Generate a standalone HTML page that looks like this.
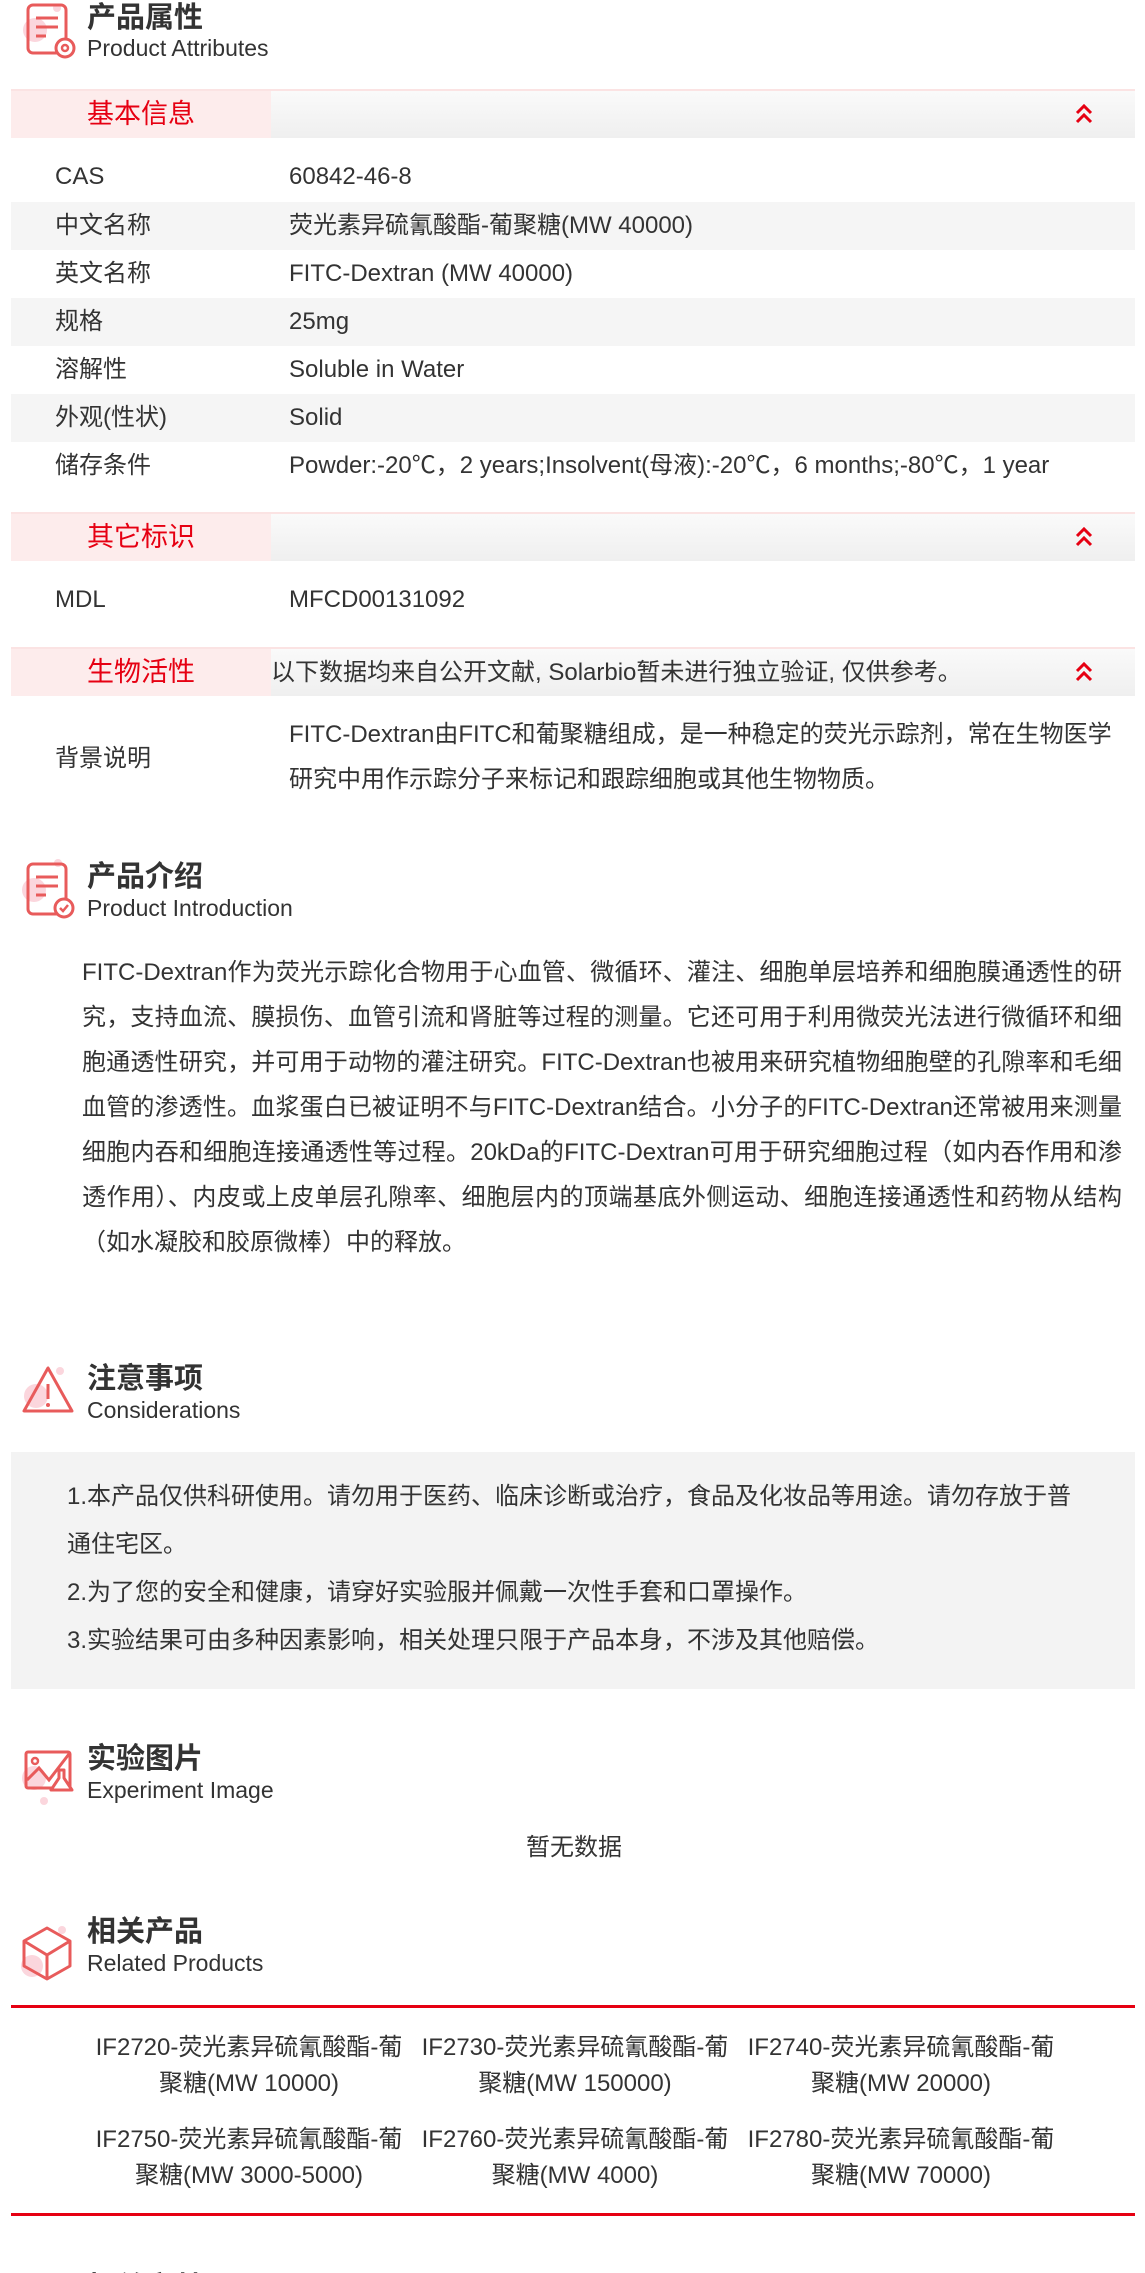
<!DOCTYPE html>
<html><head><meta charset="utf-8">
<style>
*{margin:0;padding:0;box-sizing:border-box}
html,body{width:1145px;height:2273px;overflow:hidden;background:#fff}
body{position:relative;font-family:"Liberation Sans","Noto Sans CJK SC",sans-serif;color:#333}
.a{position:absolute;white-space:nowrap}
.t{font-size:29px;font-weight:bold;line-height:36px;color:#333}
.s{font-size:23px;line-height:28px;color:#333}
.bar{position:absolute;left:11px;width:1124px;height:49px;border-top:2px solid #fbe3e3;background:linear-gradient(#fafafa,#efefef)}
.bar .l{position:absolute;left:0;top:0;width:260px;height:100%;background:#fdecec;color:#e60012;font-size:27px;line-height:47px;text-align:center}
.bar svg{position:absolute;left:1063px;top:12px}
.bar .n{position:absolute;left:260px;top:0;line-height:47px;font-size:24px;color:#333}
.row{position:absolute;left:11px;width:1124px;height:48px;font-size:24px;line-height:48px}
.g{background:#f5f5f5}
.row .k{position:absolute;left:44px}
.row .v{position:absolute;left:278px;white-space:nowrap}
.p{position:absolute;font-size:24px;line-height:45px}
.it{position:absolute;width:326px;text-align:center;font-size:24px;line-height:36px}
</style></head><body>

<svg class="a" style="left:20px;top:2px" width="56" height="58" viewBox="0 0 56 58"><circle cx="15" cy="28" r="12" fill="#fbd6dd"/><circle cx="37" cy="6" r="4" fill="#fbd6dd"/><rect x="8" y="3" width="38" height="48" rx="5" fill="none" stroke="#e85b5b" stroke-width="3"/><path d="M16 16h22M16 25h22M16 34h10" stroke="#e85b5b" stroke-width="3"/><circle cx="45" cy="46" r="9" fill="#fff" stroke="#e85b5b" stroke-width="3"/><circle cx="45" cy="46" r="3" fill="none" stroke="#e85b5b" stroke-width="2.5"/></svg>
<div class="a t" style="left:87px;top:0px">产品属性</div>
<div class="a s" style="left:87px;top:34px">Product Attributes</div>

<div class="bar" style="top:89px"><div class="l">基本信息</div><svg width="20" height="22" viewBox="0 0 20 22"><path d="M3 10l7-7 7 7M3 19l7-7 7 7" fill="none" stroke="#e60012" stroke-width="3"/></svg></div>
<div class="row" style="top:153px"><span class="k">CAS</span><span class="v">60842-46-8</span></div>
<div class="row g" style="top:202px"><span class="k">中文名称</span><span class="v">荧光素异硫氰酸酯-葡聚糖(MW 40000)</span></div>
<div class="row" style="top:250px"><span class="k">英文名称</span><span class="v">FITC-Dextran (MW 40000)</span></div>
<div class="row g" style="top:298px"><span class="k">规格</span><span class="v">25mg</span></div>
<div class="row" style="top:346px"><span class="k">溶解性</span><span class="v">Soluble in Water</span></div>
<div class="row g" style="top:394px"><span class="k">外观(性状)</span><span class="v">Solid</span></div>
<div class="row" style="top:442px"><span class="k">储存条件</span><span class="v">Powder:-20℃，2 years;Insolvent(母液):-20℃，6 months;-80℃，1 year</span></div>

<div class="bar" style="top:512px"><div class="l">其它标识</div><svg width="20" height="22" viewBox="0 0 20 22"><path d="M3 10l7-7 7 7M3 19l7-7 7 7" fill="none" stroke="#e60012" stroke-width="3"/></svg></div>
<div class="row" style="top:576px"><span class="k">MDL</span><span class="v">MFCD00131092</span></div>

<div class="bar" style="top:647px"><div class="l">生物活性</div><div class="n">以下数据均来自公开文献, Solarbio暂未进行独立验证, 仅供参考。</div><svg width="20" height="22" viewBox="0 0 20 22"><path d="M3 10l7-7 7 7M3 19l7-7 7 7" fill="none" stroke="#e60012" stroke-width="3"/></svg></div>
<div class="a" style="left:55px;top:747px;font-size:24px;line-height:24px">背景说明</div>
<div class="p" style="left:289px;top:712px;width:840px">FITC-Dextran由FITC和葡聚糖组成，是一种稳定的荧光示踪剂，常在生物医学<br>研究中用作示踪分子来标记和跟踪细胞或其他生物物质。</div>

<svg class="a" style="left:20px;top:858px" width="56" height="62" viewBox="0 0 56 62"><circle cx="14" cy="32" r="12" fill="#fbd6dd"/><circle cx="38" cy="5" r="4" fill="#fbd6dd"/><rect x="8" y="6" width="38" height="50" rx="5" fill="none" stroke="#e85b5b" stroke-width="3"/><path d="M16 19h22M16 28h22M16 37h10" stroke="#e85b5b" stroke-width="3"/><circle cx="44" cy="50" r="9" fill="#fff" stroke="#e85b5b" stroke-width="3"/><path d="M40 50l3 3 5-6" fill="none" stroke="#e85b5b" stroke-width="2.5"/></svg>
<div class="a t" style="left:87px;top:859px">产品介绍</div>
<div class="a s" style="left:87px;top:894px">Product Introduction</div>
<div class="p" style="left:82px;top:950px;width:1040px;text-align:justify">FITC-Dextran作为荧光示踪化合物用于心血管、微循环、灌注、细胞单层培养和细胞膜通透性的研究，支持血流、膜损伤、血管引流和肾脏等过程的测量。它还可用于利用微荧光法进行微循环和细胞通透性研究，并可用于动物的灌注研究。FITC-Dextran也被用来研究植物细胞壁的孔隙率和毛细血管的渗透性。血浆蛋白已被证明不与FITC-Dextran结合。小分子的FITC-Dextran还常被用来测量细胞内吞和细胞连接通透性等过程。20kDa的FITC-Dextran可用于研究细胞过程（如内吞作用和渗透作用）、内皮或上皮单层孔隙率、细胞层内的顶端基底外侧运动、细胞连接通透性和药物从结构（如水凝胶和胶原微棒）中的释放。</div>

<svg class="a" style="left:20px;top:1362px" width="56" height="56" viewBox="0 0 56 56"><circle cx="16" cy="34" r="12" fill="#fbd6dd"/><circle cx="40" cy="9" r="4" fill="#fbd6dd"/><path d="M28 6L4 49h48z" fill="none" stroke="#e85b5b" stroke-width="3" stroke-linejoin="round"/><path d="M28 22v15" stroke="#e85b5b" stroke-width="3"/><circle cx="28" cy="43" r="2" fill="#e85b5b"/></svg>
<div class="a t" style="left:87px;top:1361px">注意事项</div>
<div class="a s" style="left:87px;top:1396px">Considerations</div>
<div class="a" style="left:11px;top:1452px;width:1124px;height:237px;background:#f3f3f3"></div>
<div class="p" style="left:67px;top:1473px;line-height:48px;width:1060px">1.本产品仅供科研使用。请勿用于医药、临床诊断或治疗，食品及化妆品等用途。请勿存放于普<br>通住宅区。<br>2.为了您的安全和健康，请穿好实验服并佩戴一次性手套和口罩操作。<br>3.实验结果可由多种因素影响，相关处理只限于产品本身，不涉及其他赔偿。</div>

<svg class="a" style="left:16px;top:1748px" width="60" height="62" viewBox="0 0 60 62"><circle cx="18" cy="30" r="12" fill="#fbd6dd"/><circle cx="28" cy="53" r="4" fill="#fbd6dd"/><rect x="10" y="4" width="44" height="36" rx="2" fill="none" stroke="#e85b5b" stroke-width="3"/><circle cx="19" cy="13" r="3" fill="none" stroke="#e85b5b" stroke-width="2.5"/><path d="M11 32l12-12 10 12 20-26" fill="none" stroke="#e85b5b" stroke-width="3"/><path d="M43 22v8l-8 12h21l-8-12v-8z" fill="#fff" stroke="#e85b5b" stroke-width="3" stroke-linejoin="round"/></svg>
<div class="a t" style="left:87px;top:1741px">实验图片</div>
<div class="a s" style="left:87px;top:1776px">Experiment Image</div>
<div class="a" style="left:526px;top:1834px;font-size:24px;line-height:28px">暂无数据</div>

<svg class="a" style="left:18px;top:1922px" width="58" height="62" viewBox="0 0 58 62"><circle cx="14" cy="44" r="11" fill="#fbd6dd"/><circle cx="44" cy="8" r="4" fill="#fbd6dd"/><path d="M29 6L52 19v25L29 57 6 44V19z" fill="none" stroke="#e85b5b" stroke-width="3" stroke-linejoin="round"/><path d="M6 19l23 14 23-14M29 33v24" fill="none" stroke="#e85b5b" stroke-width="3"/></svg>
<div class="a t" style="left:87px;top:1914px">相关产品</div>
<div class="a s" style="left:87px;top:1949px">Related Products</div>
<div class="a" style="left:11px;top:2005px;width:1124px;height:3px;background:#e60012"></div>
<div class="it" style="left:86px;top:2030px">IF2720-荧光素异硫氰酸酯-葡聚糖(MW 10000)</div>
<div class="it" style="left:412px;top:2030px">IF2730-荧光素异硫氰酸酯-葡聚糖(MW 150000)</div>
<div class="it" style="left:738px;top:2030px">IF2740-荧光素异硫氰酸酯-葡聚糖(MW 20000)</div>
<div class="it" style="left:86px;top:2122px">IF2750-荧光素异硫氰酸酯-葡聚糖(MW 3000-5000)</div>
<div class="it" style="left:412px;top:2122px">IF2760-荧光素异硫氰酸酯-葡聚糖(MW 4000)</div>
<div class="it" style="left:738px;top:2122px">IF2780-荧光素异硫氰酸酯-葡聚糖(MW 70000)</div>
<div class="a" style="left:11px;top:2213px;width:1124px;height:3px;background:#e60012"></div>
<div class="a t" style="left:87px;top:2270px">相关文献</div>
</body></html>
